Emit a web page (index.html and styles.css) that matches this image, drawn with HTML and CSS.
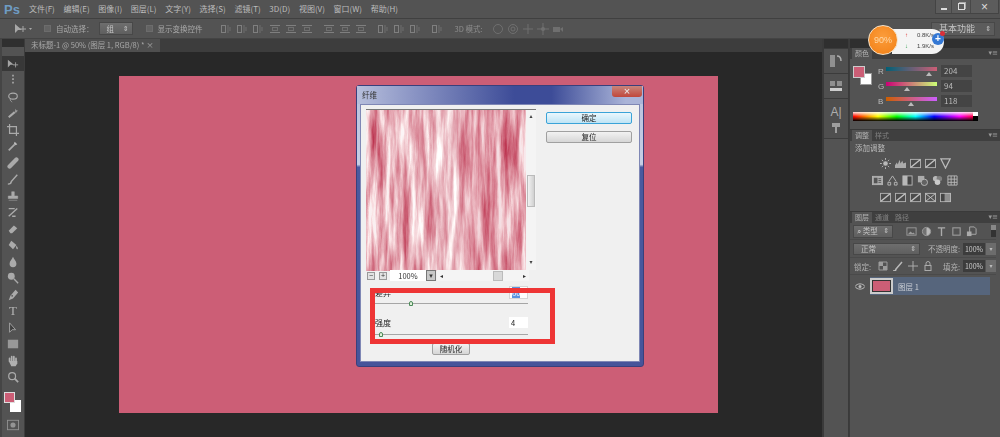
FILE: index.html
```html
<!DOCTYPE html>
<html lang="zh-CN">

<head>
    <meta charset="UTF-8">
    <title>Photoshop 纤维滤镜</title>
    <link rel="stylesheet" href="styles.css">
</head>

<body>
    <svg class="defs" width="0" height="0">
        <symbol id="align" viewBox="0 0 12 12">
            <rect x="1.5" y="2.5" width="4" height="7" fill="none" stroke="#8b8b8b"/>
            <path d="M8 2v8M10 4v4" stroke="#777" fill="none"/>
        </symbol>
        <symbol id="dist" viewBox="0 0 12 12">
            <path d="M1 2.5h10M1 9.5h10" stroke="#8b8b8b" fill="none"/>
            <rect x="3.5" y="4.5" width="5" height="3" fill="none" stroke="#777"/>
        </symbol>
        <symbol id="adj" viewBox="0 0 12 12">
            <rect x="0.5" y="1.5" width="11" height="9" fill="#4b4b4b" stroke="#c4c4c4"/>
            <path d="M1 10 11 2" stroke="#d8d8d8" stroke-width="1.5"/>
        </symbol>
        <symbol id="adj2" viewBox="0 0 12 12">
            <rect x="0.5" y="1.5" width="11" height="9" fill="#bdbdbd" stroke="#c4c4c4"/>
            <rect x="2" y="3" width="4" height="6" fill="#555"/>
            <path d="M7 4h3M7 6h3M7 8h3" stroke="#555"/>
        </symbol>
    </svg>

    <div class="app">
        <header class="menubar">
            <span class="ps-logo">Ps</span>
            <nav class="menu">
                <span>文件(F)</span><span>编辑(E)</span><span>图像(I)</span><span>图层(L)</span>
                <span>文字(Y)</span><span>选择(S)</span><span>滤镜(T)</span><span>3D(D)</span>
                <span>视图(V)</span><span>窗口(W)</span><span>帮助(H)</span>
            </nav>
            <div class="win-btns">
                <span class="win-btn"><i class="win-min"></i></span>
                <span class="win-btn win-btn-mid"><i class="win-restore"></i></span>
                <span class="win-btn win-btn-x">×</span>
            </div>
        </header>

        <div class="optbar">
            <svg class="opt-move" width="18" height="12" viewBox="0 0 18 12"><path d="M1 1v9l3-3h4z" fill="#a8a8a8"/><path d="M9 3v6M6 6h6" stroke="#a8a8a8"/><path d="M15 5h3l-1.500 2z" fill="#a8a8a8"/></svg>
            <span class="check"></span>
            <span class="opt-label">自动选择：</span>
            <span class="select opt-select">组<b>⇕</b></span>
            <span class="check opt-check2"></span>
            <span class="opt-label">显示变换控件</span>
            <div class="opt-icons opt-icons-first">
                <svg><use href="#align"/></svg><svg><use href="#align"/></svg><svg><use href="#align"/></svg>
                <svg class="sep-small"><use href="#dist"/></svg><svg><use href="#dist"/></svg><svg><use href="#dist"/></svg>
                <svg class="sep"><use href="#dist"/></svg><svg><use href="#dist"/></svg><svg><use href="#dist"/></svg>
                <svg class="sep"><use href="#align"/></svg><svg><use href="#align"/></svg><svg><use href="#align"/></svg>
                <svg class="sep"><use href="#align"/></svg>
            </div>
            <span class="opt-3d">3D 模式:</span>
            <div class="opt-icons opt-icons-3d">
                <svg viewBox="0 0 12 12"><circle cx="6" cy="6" r="4.500" fill="none" stroke="#777"/></svg>
                <svg viewBox="0 0 12 12"><circle cx="6" cy="6" r="4.500" fill="none" stroke="#777"/><circle cx="6" cy="6" r="2" fill="none" stroke="#777"/></svg>
                <svg viewBox="0 0 12 12"><path d="M6 1v10M1 6h10" stroke="#777"/></svg>
                <svg viewBox="0 0 12 12"><path d="M6 0v12M0 6h12" stroke="#777"/><circle cx="6" cy="6" r="2" fill="#777"/></svg>
                <svg viewBox="0 0 12 12"><rect x="1" y="4" width="7" height="5" fill="#777"/><path d="M8 6l3-2v5z" fill="#777"/></svg>
            </div>
            <span class="select workspace">基本功能<b>⇕</b></span>
        </div>

        <div class="workarea">
            <aside class="toolbar">
                <div class="grip"></div>
                <span class="tool tool-on"><svg viewBox="0 0 14 12"><path d="M1 1v9l3-3h4z" fill="#c8c8c8"/><path d="M10 4v6M7 7h6" stroke="#c8c8c8"/></svg></span>
                <span class="tool"><svg viewBox="0 0 14 14"><path d="M7 1v12" stroke="#c0c0c0" stroke-dasharray="2 2" stroke-width="2"/></svg></span>
                <span class="tool"><svg viewBox="0 0 14 14"><ellipse cx="7" cy="6" rx="5" ry="3.500" fill="none" stroke="#c8c8c8" stroke-width="1.300"/><path d="M4 9c-1 2 1 3 2 4" fill="none" stroke="#c8c8c8"/></svg></span>
                <span class="tool"><svg viewBox="0 0 14 14"><path d="M2 12 9 6" stroke="#c8c8c8" stroke-width="2.400"/><path d="M10 2l1 2 2 .5-2 1-.5 2-1-2" fill="#c8c8c8"/></svg></span>
                <span class="tool"><svg viewBox="0 0 14 14"><path d="M3 0v11h11M0 3h11v11" fill="none" stroke="#c8c8c8" stroke-width="1.400"/></svg></span>
                <span class="tool"><svg viewBox="0 0 14 14"><path d="M2 12 9 5" stroke="#c8c8c8" stroke-width="2"/><path d="M9 2l3 3-2 1-2-2z" fill="#e0e0e0"/></svg></span>
                <span class="tool"><svg viewBox="0 0 14 14"><path d="M3 11 11 3" stroke="#c8c8c8" stroke-width="5" stroke-linecap="round"/></svg></span>
                <span class="tool"><svg viewBox="0 0 14 14"><path d="M1 13c3 0 4-2 4-3l7-8" fill="none" stroke="#c8c8c8" stroke-width="1.600"/></svg></span>
                <span class="tool"><svg viewBox="0 0 14 14"><path d="M5.500 2h3v5h4v3h-11v-3h4zM2 12h10" fill="#c8c8c8" stroke="#c8c8c8" stroke-width=".6"/></svg></span>
                <span class="tool"><svg viewBox="0 0 14 14"><path d="M2 3h7M2 12 12 3M6 12h4" fill="none" stroke="#c8c8c8" stroke-width="1.600"/></svg></span>
                <span class="tool"><svg viewBox="0 0 14 14"><path d="M2 9 8 3l4 3-6 6H4z" fill="#c8c8c8"/></svg></span>
                <span class="tool"><svg viewBox="0 0 14 14"><path d="M5 2l6 5-4 5-5-5z" fill="#c8c8c8"/><path d="M11 8c2 2 2 4 1 4s-2-2-1-4z" fill="#c8c8c8"/></svg></span>
                <span class="tool"><svg viewBox="0 0 14 14"><path d="M7 1c1 3 4 5 4 8a4 4 0 0 1-8 0c0-3 3-5 4-8z" fill="#c8c8c8"/></svg></span>
                <span class="tool"><svg viewBox="0 0 14 14"><circle cx="5" cy="5" r="4" fill="#c8c8c8"/><path d="M8 8l5 5" stroke="#c8c8c8" stroke-width="1.600"/></svg></span>
                <span class="tool"><svg viewBox="0 0 14 14"><path d="M10 1l3 3-6 7-5 2 2-5z" fill="#c8c8c8"/><circle cx="6" cy="8" r="1" fill="#535353"/></svg></span>
                <span class="tool tool-text">T</span>
                <span class="tool"><svg viewBox="0 0 14 14"><path d="M3 1v11l3-3 4 0z" fill="#3a3a3a" stroke="#c8c8c8"/></svg></span>
                <span class="tool"><svg viewBox="0 0 14 14"><rect x="1" y="2" width="12" height="10" fill="#b0b0b0"/></svg></span>
                <span class="tool"><svg viewBox="0 0 14 14"><path d="M3 7V4M5.500 7V2M8 7V2M10.500 7V4" stroke="#d0d0d0" stroke-width="2" stroke-linecap="round"/><path d="M2 7h10v3l-2 3H5z" fill="#d0d0d0"/></svg></span>
                <span class="tool"><svg viewBox="0 0 14 14"><circle cx="6" cy="6" r="4" fill="none" stroke="#c8c8c8" stroke-width="1.400"/><path d="M9 9l4 4" stroke="#c8c8c8" stroke-width="2"/></svg></span>
                <div class="tool-colors">
                    <span class="swatch-bg"></span>
                    <span class="swatch-fg"></span>
                </div>
                <span class="tool tool-mask"><svg viewBox="0 0 14 12"><rect x=".5" y=".5" width="13" height="11" fill="none" stroke="#aaa"/><circle cx="7" cy="6" r="3" fill="#aaa"/></svg></span>
            </aside>

            <main class="doc">
                <div class="tabs"><span class="tab">未标题-1 @ 50% (图层 1, RGB/8) * <b>×</b></span></div>
                <div class="canvas">
                    <div class="artboard"></div>

                    <section class="dialog">
                        <div class="dialog-title"><span>纤维</span><span class="dialog-close">×</span></div>
                        <div class="dialog-body">
                            <div class="dialog-left">
                                <div class="preview-wrap">
                                    <svg class="preview" width="160" height="161">
                                        <defs>
                                            <filter id="fibers" x="0" y="0" width="100%" height="100%" color-interpolation-filters="sRGB">
                                                <feTurbulence type="fractalNoise" baseFrequency="0.16 0.014" numOctaves="5" seed="11"/>
                                                <feColorMatrix type="matrix" values=".5 0 0 0 .65  1.400 0 0 0 -.04  1.200 0 0 0 .1  0 0 0 0 1"/>
                                            </filter>
                                            <linearGradient id="fiber-shade">
                                                <stop offset="0" stop-color="#cc5e76" stop-opacity=".1"/>
                                                <stop offset=".38" stop-color="#fff" stop-opacity=".2"/>
                                                <stop offset=".56" stop-color="#fff" stop-opacity=".32"/>
                                                <stop offset=".66" stop-color="#cc5e76" stop-opacity=".28"/>
                                                <stop offset="1" stop-color="#cc5e76" stop-opacity=".14"/>
                                            </linearGradient>
                                        </defs>
                                        <rect width="160" height="161" filter="url(#fibers)"/>
                                        <rect width="160" height="161" fill="url(#fiber-shade)"/>
                                    </svg>
                                    <div class="vscroll"><span>▴</span><i></i><span>▾</span></div>
                                </div>
                                <div class="zoombar">
                                    <span class="zoom-btn">−</span>
                                    <span class="zoom-btn">+</span>
                                    <span class="zoom-val">100%</span>
                                    <span class="zoom-drop">▾</span>
                                    <div class="hscroll"><span>◂</span><i></i><span>▸</span></div>
                                </div>
                                <div class="param param-first">
                                    <div class="param-head"><label>差异</label><span class="param-input"><em>60</em></span></div>
                                    <div class="slider"><i class="thumb thumb-a"></i></div>
                                </div>
                                <div class="param param-second">
                                    <div class="param-head"><label>强度</label><span class="param-input">4</span></div>
                                    <div class="slider"><i class="thumb thumb-b"></i></div>
                                </div>
                                <div class="random-row"><button class="btn btn-random">随机化</button></div>
                            </div>
                            <div class="dialog-right">
                                <button class="btn btn-ok">确定</button>
                                <button class="btn">复位</button>
                            </div>
                        </div>
                        <div class="red-frame"></div>
                    </section>
                </div>
            </main>

            <aside class="dock">
                <div class="dock-grip"></div>
                <div class="dock-group">
                    <svg width="14" height="14" viewBox="0 0 14 14"><rect x="1" y="1" width="5" height="12" fill="#9a9a9a"/><path d="M8 2c3 0 4 2 4 5" fill="none" stroke="#bbb" stroke-width="1.500"/></svg>
                </div>
                <div class="dock-group">
                    <svg width="14" height="14" viewBox="0 0 14 14"><path d="M1 2h5v5H1zM8 2h5v5H8z" fill="#999"/><rect x="1" y="9" width="12" height="3" fill="#ddd"/></svg>
                </div>
                <div class="dock-group dock-tall">
                    <span class="dock-a">A|</span>
                    <svg width="10" height="10" viewBox="0 0 10 10"><path d="M1 0h8v4H6v6H4V4H1z" fill="#aaa"/></svg>
                </div>
            </aside>

            <aside class="panels">
                <div class="panels-grip"></div>
                <section class="panel panel-color">
                    <div class="panel-tabs"><span class="ptab ptab-on">颜色</span><b class="panel-menu">▾≡</b></div>
                    <div class="color-main">
                        <div class="color-swatches"><i class="cs-bg"></i><i class="cs-fg"></i></div>
                        <div class="color-rows">
                            <div class="color-row"><label>R</label><div class="cbar cbar-r"><i style="left: 78%"></i></div><span class="cval">204</span></div>
                            <div class="color-row"><label>G</label><div class="cbar cbar-g"><i style="left: 35%"></i></div><span class="cval">94</span></div>
                            <div class="color-row"><label>B</label><div class="cbar cbar-b"><i style="left: 44%"></i></div><span class="cval">118</span></div>
                        </div>
                    </div>
                    <div class="spectrum"><i class="spec-wb"></i></div>
                </section>

                <section class="panel panel-adjust">
                    <div class="panel-tabs"><span class="ptab ptab-on">调整</span><span class="ptab">样式</span><b class="panel-menu">▾≡</b></div>
                    <div class="adjust-title">添加调整</div>
                    <div class="adj-row">
                        <svg viewBox="0 0 12 12"><circle cx="6" cy="6" r="2.500" fill="#ccc"/><path d="M6 0v2M6 10v2M0 6h2M10 6h2M2 2l1.500 1.500M8.500 8.500 10 10M2 10l1.500-1.500M8.500 3.500 10 2" stroke="#ccc"/></svg>
                        <svg viewBox="0 0 12 12"><path d="M0 11V8l2-3 1 2 2-5 1 4 2-3 1 3 3-1v6z" fill="#bbb"/></svg>
                        <svg><use href="#adj"/></svg>
                        <svg><use href="#adj"/></svg>
                        <svg viewBox="0 0 12 12"><path d="M1 1h10L6 11z" fill="none" stroke="#ccc" stroke-width="1.400"/></svg>
                    </div>
                    <div class="adj-row">
                        <svg><use href="#adj2"/></svg>
                        <svg viewBox="0 0 12 12"><path d="M6 1 2 7M6 1l4 6M1 8h3v3H1zM8 8h3v3H8z" fill="none" stroke="#ccc"/></svg>
                        <svg viewBox="0 0 12 12"><rect x="1" y="1" width="10" height="10" fill="#444" stroke="#ccc"/><rect x="1" y="1" width="5" height="10" fill="#ccc"/></svg>
                        <svg viewBox="0 0 12 12"><rect x="1" y="1" width="7" height="7" fill="#bbb"/><circle cx="8" cy="8" r="3.500" fill="#666" stroke="#ccc"/></svg>
                        <svg viewBox="0 0 12 12"><circle cx="4" cy="4" r="3" fill="#ccc"/><circle cx="8" cy="4" r="3" fill="#888"/><circle cx="6" cy="8" r="3" fill="#e0e0e0"/></svg>
                        <svg viewBox="0 0 12 12"><path d="M1 1h10v10H1zM1 4.500h10M1 8h10M4.500 1v10M8 1v10" fill="none" stroke="#ccc"/></svg>
                    </div>
                    <div class="adj-row">
                        <svg><use href="#adj"/></svg>
                        <svg><use href="#adj"/></svg>
                        <svg><use href="#adj"/></svg>
                        <svg viewBox="0 0 12 12"><rect x=".5" y="1.500" width="11" height="9" fill="#555" stroke="#ccc"/><path d="M1 2l10 8M11 2 1 10" stroke="#ddd"/></svg>
                        <svg viewBox="0 0 12 12"><rect x=".5" y="1.500" width="11" height="9" fill="#999" stroke="#ccc"/><rect x="1" y="2" width="4" height="8" fill="#444"/></svg>
                    </div>
                </section>

                <section class="panel panel-layers">
                    <div class="panel-tabs"><span class="ptab ptab-on">图层</span><span class="ptab">通道</span><span class="ptab">路径</span><b class="panel-menu">▾≡</b></div>
                    <div class="layer-row filter-row">
                        <span class="select layer-filter">⌕ 类型<b>⇕</b></span>
                        <div class="filter-icons">
                            <svg viewBox="0 0 12 12"><rect x="1" y="2" width="10" height="8" fill="none" stroke="#aaa"/><path d="M2 9l3-3 2 2 1-1 2 2z" fill="#aaa"/></svg>
                            <svg viewBox="0 0 12 12"><circle cx="6" cy="6" r="4.500" fill="#777" stroke="#aaa"/><path d="M6 2a4 4 0 0 1 0 8z" fill="#ccc"/></svg>
                            <svg viewBox="0 0 12 12"><path d="M2 2h8M6 2v9" stroke="#bbb" stroke-width="1.500"/></svg>
                            <svg viewBox="0 0 12 12"><rect x="2" y="2" width="8" height="8" fill="none" stroke="#aaa" stroke-width="1.200"/></svg>
                            <svg viewBox="0 0 12 12"><path d="M4 1h5l2 2v6H4z" fill="none" stroke="#bbb"/><rect x="1" y="6" width="5" height="5" fill="#bbb"/></svg>
                        </div>
                        <span class="filter-toggle"><i></i></span>
                    </div>
                    <div class="layer-row blend-row">
                        <span class="select layer-blend">正常<b>⇕</b></span>
                        <span class="row-label right-label">不透明度:</span>
                        <span class="pct">100%</span><span class="step">▾</span>
                    </div>
                    <div class="layer-row lock-row">
                        <span class="row-label">锁定:</span>
                        <div class="lock-icons">
                            <svg viewBox="0 0 10 10"><path d="M1 1h8v8H1z" fill="none" stroke="#aaa"/><path d="M1 1h4v4H1zM5 5h4v4H5z" fill="#aaa"/></svg>
                            <svg viewBox="0 0 10 10"><path d="M0 10c2 0 3-1 3-2l6-7" fill="none" stroke="#ccc" stroke-width="1.500"/></svg>
                            <svg viewBox="0 0 10 10"><path d="M5 0v10M0 5h10" stroke="#bbb"/></svg>
                            <svg viewBox="0 0 10 10"><rect x="2" y="4.500" width="6" height="5" fill="none" stroke="#bbb"/><path d="M3 4.500V2.500a2 2 0 0 1 4 0v2" fill="none" stroke="#bbb"/></svg>
                        </div>
                        <span class="row-label right-label">填充:</span>
                        <span class="pct">100%</span><span class="step">▾</span>
                    </div>
                    <div class="layer-item">
                        <span class="eye"><svg width="10" height="7" viewBox="0 0 10 7"><path d="M0 3.500C2 0 8 0 10 3.500 8 7 2 7 0 3.500z" fill="none" stroke="#bbb"/><circle cx="5" cy="3.500" r="1.500" fill="#bbb"/></svg></span>
                        <span class="layer-thumb"></span>
                        <span class="layer-name">图层 1</span>
                    </div>
                </section>
            </aside>
        </div>

        <div class="float-widget">
            <span class="fw-circle">90%</span>
            <div class="fw-stats">
                <span><i class="up">↑</i>0.8K/s</span>
                <span><i class="down">↓</i>1.9K/s</span>
            </div>
            <span class="fw-plus">+<i></i></span>
        </div>
    </div>
</body>

</html>
```

FILE: styles.css
```css
* {
    box-sizing: border-box;
}

html, body {
    margin: 0;
    height: 100%;
    overflow: hidden;
}

body {
    font-family: "Noto Sans CJK SC", "Liberation Sans", sans-serif;
    font-size: 7.5px;
    color: #bcbcbc;
    background-color: #535353;
}

.defs {
    display: block;
    height: 0;
}

.app {
    position: relative;
    width: 1000px;
    height: 437px;
    display: flex;
    flex-direction: column;
    filter: blur(0.6px);
}

/* menu */
.menubar {
    height: 18px;
    display: flex;
    align-items: center;
    background-color: #535353;
}

.ps-logo {
    width: 29px;
    padding-left: 4px;
    font: bold 13px "Liberation Sans", sans-serif;
    color: #6f9cc4;
}

.menu {
    display: flex;
    gap: 8.7px;
    font-size: 8px;
    line-height: 18px;
}

.win-btns {
    margin-left: auto;
    margin-right: 1px;
    align-self: flex-start;
    display: flex;
    height: 14px;
    border: 1px solid #444;
    border-top: none;
    background-color: #5c5c5c;
}

.win-btn {
    width: 16px;
    height: 13px;
    display: flex;
    align-items: center;
    justify-content: center;
    border-right: 1px solid #484848;
    color: #ddd;
    font: 12px "Liberation Sans", sans-serif;
}

.win-btn-mid {
    width: 19px;
}

.win-btn-x {
    width: 27px;
    border: none;
}

.win-min {
    width: 6px;
    height: 2px;
    margin-top: 4px;
    background-color: #ddd;
}

.win-restore {
    width: 7px;
    height: 7px;
    border: 1px solid #ddd;
    box-shadow: 1px -1px 0 #aaa;
}

/* options bar */
.optbar {
    height: 21px;
    display: flex;
    align-items: center;
    padding-left: 14px;
    background-color: #535353;
    border-top: 1px solid #404040;
    border-bottom: 1px solid #444;
    color: #a8a8a8;
}

.opt-move {
    margin-right: 12px;
}

.check {
    width: 7px;
    height: 7px;
    margin-right: 5px;
    background-color: #636363;
    border: 1px solid #6c6c6c;
}

.opt-check2 {
    margin-left: 13px;
}

.opt-label {
    white-space: nowrap;
}

.select {
    display: flex;
    align-items: center;
    justify-content: space-between;
    padding: 0 3px 0 7px;
    background: linear-gradient(#6e6e6e, #5f5f5f);
    border: 1px solid #484848;
    color: #c4c4c4;
}

.select b {
    font: 7px "DejaVu Sans", sans-serif;
}

.opt-select {
    width: 34px;
    height: 13px;
    margin-left: 5px;
}

.opt-icons {
    display: flex;
    gap: 4px;
    opacity: 0.8;
}

.opt-icons svg {
    width: 12px;
    height: 12px;
}

.opt-icons .sep-small {
    margin-left: 1px;
}

.opt-icons .sep {
    margin-left: 6px;
}

.opt-icons-first {
    margin-left: 17px;
}

.opt-3d {
    margin-left: 12px;
    color: #8e8e8e;
    white-space: nowrap;
}

.opt-icons-3d {
    margin-left: 9px;
    gap: 3px;
}

.workspace {
    width: 64px;
    height: 14px;
    margin-left: auto;
    margin-right: 5px;
    font-size: 9px;
    background: #5c5c5c;
}

/* layout of the work area */
.workarea {
    flex: 1;
    min-height: 0;
    display: grid;
    grid-template-columns: 25px 1fr 27px 151px;
}

/* tools */
.toolbar {
    display: flex;
    flex-direction: column;
    align-items: center;
    background-color: #535353;
    border-left: 2px solid #454545;
    border-right: 1px solid #3c3c3c;
}

.grip {
    width: 100%;
    height: 17px;
    background: linear-gradient(#2f2f2f 8px, #535353 8px);
}

.tool {
    width: 22px;
    height: 16.5px;
    display: flex;
    align-items: center;
    justify-content: center;
    flex: none;
    position: relative;
}

.tool svg {
    width: 12px;
    height: 12px;
    opacity: 0.75;
}

.tool-on {
    height: 15px;
    margin-bottom: 1px;
    background-color: #383838;
}

.tool-text {
    font: 13px "Liberation Serif", serif;
    color: #b4b4b4;
}

.tool-colors {
    position: relative;
    width: 20px;
    height: 24px;
    margin-top: 6px;
    flex: none;
}

.swatch-fg {
    position: absolute;
    left: 1px;
    top: 0;
    width: 11px;
    height: 11px;
    background-color: #cc5e76;
    border: 1px solid #ddd;
}

.swatch-bg {
    position: absolute;
    left: 7px;
    top: 8px;
    width: 11px;
    height: 12px;
    background-color: #fff;
}

.tool-mask {
    height: 14px;
    margin-top: 2px;
}

/* document */
.doc {
    display: flex;
    flex-direction: column;
    min-width: 0;
}

.tabs {
    height: 13px;
    background-color: #3d3d3d;
}

.tab {
    display: inline-block;
    height: 13px;
    padding: 0 6px;
    width: 135px;
    line-height: 12px;
    font-size: 7.5px;
    color: #a8a8a8;
    white-space: nowrap;
    background-color: #4f4f4f;
}

.tab b {
    font-weight: normal;
}

.canvas {
    position: relative;
    flex: 1;
    padding: 24px 0 0 94px;
    background-color: #282828;
}

.artboard {
    width: 599px;
    height: 337px;
    background-color: #cc5e76;
}

/* filter dialog */
.dialog {
    position: absolute;
    left: 331px;
    top: 33px;
    width: 288px;
    height: 282px;
    display: flex;
    flex-direction: column;
    padding: 0 3px 4px;
    border-radius: 3px;
    border: 1px solid #39407c;
    background: linear-gradient(#b9c1dd 0, #c6cfe5 28%, #4a5a9f 29%, #46549a 100%);
    color: #222;
}

.dialog-title {
    height: 18px;
    margin: 0 -3px;
    padding: 0 1px 0 5px;
    display: flex;
    justify-content: space-between;
    line-height: 17px;
    color: #333;
    background: linear-gradient(90deg, #b7bfdc, #8a94c4 20%, #3d4c98 55%, #3d4c98 68%, #aab4d8 94%);
}

.dialog-close {
    width: 30px;
    height: 11px;
    border-radius: 0 0 3px 3px;
    background: linear-gradient(#c9857b, #c0473b);
    color: #eee;
    text-align: center;
    font: 11px/10px "Liberation Sans", sans-serif;
}

.dialog-body {
    flex: 1;
    display: flex;
    padding: 4px 5px 0;
    background-color: #f0f0f0;
    border: 1px solid #7f87b5;
}

.dialog-left {
    width: 170px;
}

.preview-wrap {
    display: flex;
    height: 161px;
    border-top: 1px solid #777;
}

.preview {
    display: block;
    flex: none;
}

.vscroll {
    width: 10px;
    display: flex;
    flex-direction: column;
    justify-content: space-between;
    align-items: center;
    padding: 2px 0 4px;
    background-color: #f4f4f4;
    color: #444;
    font: 6px/8px "DejaVu Sans", sans-serif;
}

.vscroll i {
    width: 8px;
    height: 32px;
    margin-top: 4px;
    background: linear-gradient(90deg, #f2f2f2, #d0d0d0);
    border: 1px solid #bbb;
}

.zoombar {
    height: 11px;
    display: flex;
    align-items: center;
    color: #333;
    font-size: 7.5px;
}

.zoom-btn {
    width: 8px;
    height: 8px;
    margin: 0 3px 0 1px;
    border: 1px solid #999;
    background-color: #e2e2e2;
    font: 7px/6px "Liberation Sans", sans-serif;
    text-align: center;
}

.zoom-val {
    width: 36px;
    height: 11px;
    line-height: 11px;
    text-align: center;
    background-color: #fff;
}

.zoom-drop {
    width: 10px;
    height: 11px;
    background-color: #c8c8c8;
    border: 1px solid #777;
    font: 7px/10px "DejaVu Sans", sans-serif;
    text-align: center;
}

.hscroll {
    margin-left: 1px;
    width: 92px;
    height: 11px;
    display: flex;
    align-items: center;
    justify-content: space-between;
    padding: 0 3px;
    background-color: #f4f4f4;
    font: 6px "DejaVu Sans", sans-serif;
}

.hscroll i {
    width: 10px;
    height: 10px;
    margin-left: 30px;
    background-color: #d8d8d8;
    border: 1px solid #bbb;
}

.param {
    width: 153px;
    margin-left: 9px;
}

.param-first {
    margin-top: 5px;
    height: 30px;
}

.param-second {
    height: 27px;
}

.param-head {
    display: flex;
    justify-content: space-between;
    align-items: center;
    font-size: 8px;
    line-height: 13px;
}

.param-input {
    width: 19px;
    height: 13px;
    padding: 0 2px;
    background-color: #fff;
    border: 1px solid #d6d6d6;
    font-size: 7.5px;
    line-height: 11px;
}

.param-second .param-input {
    height: 11px;
    border: none;
    line-height: 11px;
}

.param-input em {
    font-style: normal;
    color: #fff;
    background-color: #5b93de;
}

.slider {
    position: relative;
    height: 1px;
    margin-top: 4px;
    background-color: #a6a6a6;
}

.param-second .slider {
    margin-top: 5px;
}

.thumb {
    position: absolute;
    top: -2px;
    width: 4px;
    height: 5px;
    background-color: #dff0d8;
    border: 1px solid #4c8a5a;
    border-radius: 2px 2px 0 0;
}

.thumb-a {
    left: 34px;
}

.thumb-b {
    left: 4px;
}

.random-row {
    display: flex;
    justify-content: center;
}

.dialog-right {
    display: flex;
    flex-direction: column;
    gap: 7px;
    margin: 3px 0 0 10px;
}

.btn {
    width: 86px;
    height: 12px;
    padding: 0;
    border: 1px solid #a0a0a0;
    border-radius: 2px;
    background: linear-gradient(#f2f2f2, #d6d6d6);
    font: 7.5px/10px "Noto Sans CJK SC", sans-serif;
    color: #222;
}

.btn-ok {
    border-color: #3aa3d8;
    background: linear-gradient(#eaf7fd, #bfe4f5);
}

.btn-random {
    width: 38px;
}

.red-frame {
    position: absolute;
    left: 13px;
    top: 202px;
    width: 185px;
    height: 56px;
    border: 5px solid #ee3535;
}

/* narrow icon dock */
.dock {
    display: flex;
    flex-direction: column;
    padding: 0 1px 0 2px;
    background-color: #3a3a3a;
}

.dock-grip {
    height: 9px;
    background-color: #2f2f2f;
}

.dock-group {
    height: 25px;
    display: flex;
    flex-direction: column;
    align-items: center;
    justify-content: center;
    gap: 4px;
    border-top: 1px solid #3c3c3c;
    background-color: #535353;
    opacity: 0.9;
}

.dock-tall {
    height: 40px;
    flex: none;
}

.dock-a {
    font: 12px "Liberation Sans", sans-serif;
    color: #bbb;
}

.dock::after {
    content: "";
    flex: 1;
    background-color: #535353;
    border-top: 1px solid #3c3c3c;
}

/* panels */
.panels {
    display: flex;
    flex-direction: column;
    background-color: #535353;
    border-left: 1px solid #3c3c3c;
}

.panels-grip {
    height: 9px;
    background-color: #2f2f2f;
}

.panel-tabs {
    height: 11px;
    display: flex;
    align-items: flex-end;
    padding-left: 2px;
    background-color: #3f3f3f;
}

.ptab {
    width: 20px;
    height: 11px;
    text-align: center;
    line-height: 11px;
    font-size: 7px;
    color: #808080;
}

.ptab-on {
    background-color: #535353;
    color: #b4b4b4;
}

.panel-menu {
    margin-left: auto;
    margin-right: 2px;
    font: 7px/11px "DejaVu Sans", sans-serif;
    color: #999;
}

.panel-color {
    height: 81px;
}

.color-main {
    display: flex;
    padding: 7px 0 0 3px;
}

.color-swatches {
    position: relative;
    width: 19px;
    height: 19px;
    flex: none;
}

.cs-fg {
    position: absolute;
    left: 0;
    top: 0;
    width: 12px;
    height: 12px;
    background-color: #cc5e76;
    border: 1px solid #ccc;
}

.cs-bg {
    position: absolute;
    left: 7px;
    top: 7px;
    width: 12px;
    height: 12px;
    background-color: #fff;
    border: 1px solid #999;
}

.color-rows {
    display: flex;
    flex-direction: column;
    gap: 3px;
    margin-left: 6px;
    margin-top: -1px;
}

.color-row {
    display: flex;
    align-items: center;
    height: 12px;
    font-size: 8px;
}

.color-row label {
    width: 8px;
    font-family: "Liberation Sans", sans-serif;
}

.cbar {
    position: relative;
    width: 51px;
    height: 4px;
    margin-top: -5px;
    margin-right: 4px;
}

.cbar i {
    position: absolute;
    top: 5px;
    width: 0;
    height: 0;
    border: 3px solid transparent;
    border-top: none;
    border-bottom: 4px solid #bbb;
}

.cbar-r {
    background: linear-gradient(90deg, #006076, #cc5e76);
}

.cbar-g {
    background: linear-gradient(90deg, #cc0076, #ccff76);
}

.cbar-b {
    background: linear-gradient(90deg, #cc5e00, #cc5eff);
}

.cval {
    width: 31px;
    height: 12px;
    padding-left: 3px;
    line-height: 12px;
    color: #bbb;
    background-color: #444;
}

.spectrum {
    position: relative;
    width: 125px;
    height: 9px;
    margin: 5px 0 0 3px;
    background:
        linear-gradient(rgba(255, 255, 255, 0.9), rgba(255, 255, 255, 0) 50%, rgba(0, 0, 0, 0) 50%, #000),
        linear-gradient(90deg, #f00, #ff0 20%, #0f0 35%, #0ff 50%, #00f 65%, #f0f 85%, #f00);
}

.spec-wb {
    position: absolute;
    right: 0;
    top: 0;
    width: 5px;
    height: 9px;
    background: linear-gradient(#fff 50%, #000 50%);
}

.panel-adjust {
    height: 82px;
    border-top: 1px solid #3a3a3a;
}

.adjust-title {
    padding-left: 5px;
    line-height: 13px;
}

.adj-row {
    display: flex;
    justify-content: center;
    gap: 4px;
    height: 17px;
    padding-right: 20px;
    align-items: center;
    opacity: 0.85;
}

.adj-row svg {
    width: 11px;
    height: 11px;
}

.adjust-title + .adj-row {
    margin-top: 1px;
}

.panel-layers {
    flex: 1;
    border-top: 1px solid #3a3a3a;
}

.layer-row {
    display: flex;
    align-items: center;
    margin-right: 4px;
    padding-left: 3px;
    border-bottom: 1px solid #4a4a4a;
}

.filter-row {
    height: 17px;
}

.layer-filter {
    width: 42px;
    height: 13px;
    padding-left: 3px;
}

.filter-icons {
    display: flex;
    gap: 4px;
    margin-left: 13px;
    opacity: 0.85;
}

.filter-icons svg {
    width: 11px;
    height: 11px;
}

.filter-toggle {
    margin-left: 14px;
    width: 5px;
    height: 12px;
    background-color: #333;
}

.filter-toggle i {
    display: block;
    width: 5px;
    height: 5px;
    background-color: #888;
}

.blend-row {
    height: 18px;
}

.layer-blend {
    width: 67px;
    height: 12px;
}

.row-label {
    white-space: nowrap;
    color: #b4b4b4;
}

.right-label {
    margin-left: auto;
}

.pct {
    width: 22px;
    height: 12px;
    margin-left: 3px;
    line-height: 12px;
    font-size: 7px;
    text-align: center;
    background-color: #3c3c3c;
    color: #ccc;
}

.step {
    width: 10px;
    height: 12px;
    margin-left: 1px;
    background-color: #6c6c6c;
    font: 6px/12px "DejaVu Sans", sans-serif;
    text-align: center;
}

.lock-row {
    height: 17px;
    padding-left: 4px;
}

.lock-icons {
    display: flex;
    gap: 5px;
    margin-left: 7px;
    opacity: 0.85;
}

.lock-icons svg {
    width: 10px;
    height: 10px;
}

.layer-item {
    height: 18px;
    margin: 2px 10px 0 0;
    display: flex;
    align-items: center;
    background-color: #56657c;
}

.eye {
    width: 20px;
    height: 18px;
    display: flex;
    align-items: center;
    justify-content: center;
    background-color: #535353;
}

.layer-thumb {
    width: 23px;
    height: 16px;
    background-color: #cc5e76;
    border: 2px solid #ccc;
    outline: 1px solid #333;
    outline-offset: -3px;
}

.layer-name {
    margin-left: 5px;
    font-size: 7.5px;
    color: #ccd0d6;
}

/* floating network widget */
.float-widget {
    position: absolute;
    left: 868px;
    top: 25px;
    height: 30px;
    display: flex;
    align-items: center;
}

.fw-circle {
    position: relative;
    z-index: 1;
    width: 30px;
    height: 30px;
    border: 1px solid #f7e3c8;
    border-radius: 50%;
    background: radial-gradient(circle at 50% 40%, #fb9d3c, #f27f14);
    color: #ffd9a8;
    font: 9px/28px "Liberation Sans", sans-serif;
    text-align: center;
}

.fw-stats {
    width: 52px;
    height: 25px;
    margin: 3px 0 0 -6px;
    padding: 1px 0 0 13px;
    display: flex;
    flex-direction: column;
    border-radius: 0 12px 12px 0;
    background-color: #f4f4f4;
    color: #444;
    font: 6px/11px "Liberation Sans", sans-serif;
}

.fw-stats i {
    width: 12px;
    display: inline-block;
    font-style: normal;
    font-weight: bold;
}

.up {
    color: #d33;
}

.down {
    color: #2a9a4a;
}

.fw-plus {
    position: relative;
    width: 12px;
    height: 12px;
    margin: -2px 0 0 -12px;
    border-radius: 50%;
    background-color: #3478d4;
    color: #fff;
    font: bold 10px/12px "Liberation Sans", sans-serif;
    text-align: center;
}

.fw-plus i {
    position: absolute;
    right: -1px;
    top: -2px;
    width: 5px;
    height: 5px;
    border-radius: 50%;
    background-color: #d8303a;
}
```
